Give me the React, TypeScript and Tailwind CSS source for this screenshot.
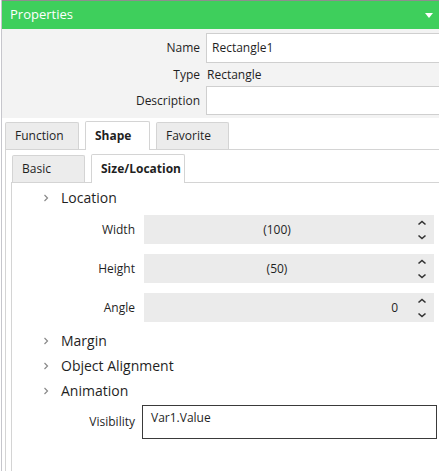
import React from "react";

function Chevron() {
  return (
    <svg width="6" height="8" viewBox="0 0 6 8" className="shrink-0">
      <path d="M1.5 1 L4.5 4 L1.5 7" fill="none" stroke="#8a8a8a" strokeWidth="1.2" />
    </svg>
  );
}

function Spinner() {
  return (
    <svg width="24" height="29" viewBox="0 0 24 29" className="shrink-0">
      <path d="M8.5 9.5 L12 6.5 L15.5 9.5" fill="none" stroke="#333" strokeWidth="1.6" />
      <path d="M8.5 20.5 L12 23.5 L15.5 20.5" fill="none" stroke="#333" strokeWidth="1.6" />
    </svg>
  );
}

function Section({ title }: { title: string }) {
  return (
    <div className="h-[25px] flex items-center text-[14px]">
      <div className="w-[31px]" />
      <Chevron />
      <span className="ml-[12px]">{title}</span>
    </div>
  );
}

function NumberRow({
  label,
  value,
  center = true,
}: {
  label: string;
  value: string;
  center?: boolean;
}) {
  return (
    <div className="flex items-center h-[29px]">
      <div className="w-[123px] text-right">{label}</div>
      <div className="ml-[9px] mr-[5px] flex-1 h-full bg-[#ebebeb] flex items-center">
        <div className={center ? "flex-1 text-center" : "flex-1 text-right pr-[12px]"}>
          {value}
        </div>
        <Spinner />
      </div>
    </div>
  );
}

function Tab({
  label,
  active,
  width,
}: {
  label: string;
  active?: boolean;
  width: string;
}) {
  return (
    <div
      className={
        active
          ? `${width} h-[29px] -mb-px relative z-10 bg-white border border-b-0 border-[#d4d4d4] rounded-t-[2px] pl-[9px] flex items-center font-bold`
          : `${width} h-[27px] bg-[#ececec] border border-b-0 border-[#d4d4d4] rounded-t-[2px] pl-[9px] flex items-center`
      }
    >
      {label}
    </div>
  );
}

export default function App() {
  return (
    <div className="w-[444px] h-[471px] bg-white pl-px overflow-hidden font-['Open_Sans',sans-serif] text-[12px] text-[#1f1f1f]">
      <div className="w-[438px] h-full border-l border-[#c6c6cc] flex flex-col">
        {/* Header */}
        <div className="h-[29px] border-t border-[#8e8e8e] bg-[#3ecf5c] flex items-center justify-between pl-[8px] pr-[6px] text-white text-[13px]">
          <span>Properties</span>
          <svg width="8" height="5" viewBox="0 0 8 5">
            <path d="M0 0 H8 L4 5 Z" fill="white" />
          </svg>
        </div>

        {/* General fields */}
        <div className="bg-[#f3f3f3] pt-[4px] pb-[3px] grid grid-cols-[198px_1fr] gap-x-[6px] items-center">
          <div className="text-right">Name</div>
          <div className="h-[30px] bg-white border border-r-0 border-[#cfcfcf] flex items-center pl-[5px]">
            Rectangle1
          </div>
          <div className="text-right h-[23px] flex items-center justify-end">Type</div>
          <div className="pl-px">Rectangle</div>
          <div className="text-right">Description</div>
          <div className="h-[29px] bg-white border border-r-0 border-[#cfcfcf]" />
        </div>

        {/* Tabs */}
        <div className="flex-1 flex flex-col pt-[3px] pl-[3px]">
          <div className="flex items-end gap-[6px]">
            <Tab label="Function" width="w-[74px]" />
            <Tab label="Shape" width="w-[65px]" active />
            <Tab label="Favorite" width="w-[73px]" />
          </div>
          <div className="flex-1 border-t border-l border-[#d4d4d4] pt-[4px] pl-[5px] flex flex-col">
            <div className="flex items-end gap-[6px] pl-px">
              <Tab label="Basic" width="w-[73px]" />
              <Tab label="Size/Location" width="w-[94px]" active />
            </div>
            <div className="flex-1 border-t border-l border-[#d4d4d4] pt-[2px] flex flex-col">
              <Section title="Location" />
              <div className="mt-[5px] flex flex-col gap-[10px]">
                <NumberRow label="Width" value="(100)" />
                <NumberRow label="Height" value="(50)" />
                <NumberRow label="Angle" value="0" center={false} />
              </div>
              <div className="mt-[6px]">
                <Section title="Margin" />
                <Section title="Object Alignment" />
                <Section title="Animation" />
              </div>
              <div className="mt-[2px] flex items-center h-[34px]">
                <div className="w-[123px] text-right">Visibility</div>
                <div className="ml-[7px] mr-[2px] flex-1 h-full bg-white border border-[#3a3a3a] pl-[8px] pt-[3px]">
                  Var1.Value
                </div>
              </div>
            </div>
          </div>
        </div>
      </div>
    </div>
  );
}
